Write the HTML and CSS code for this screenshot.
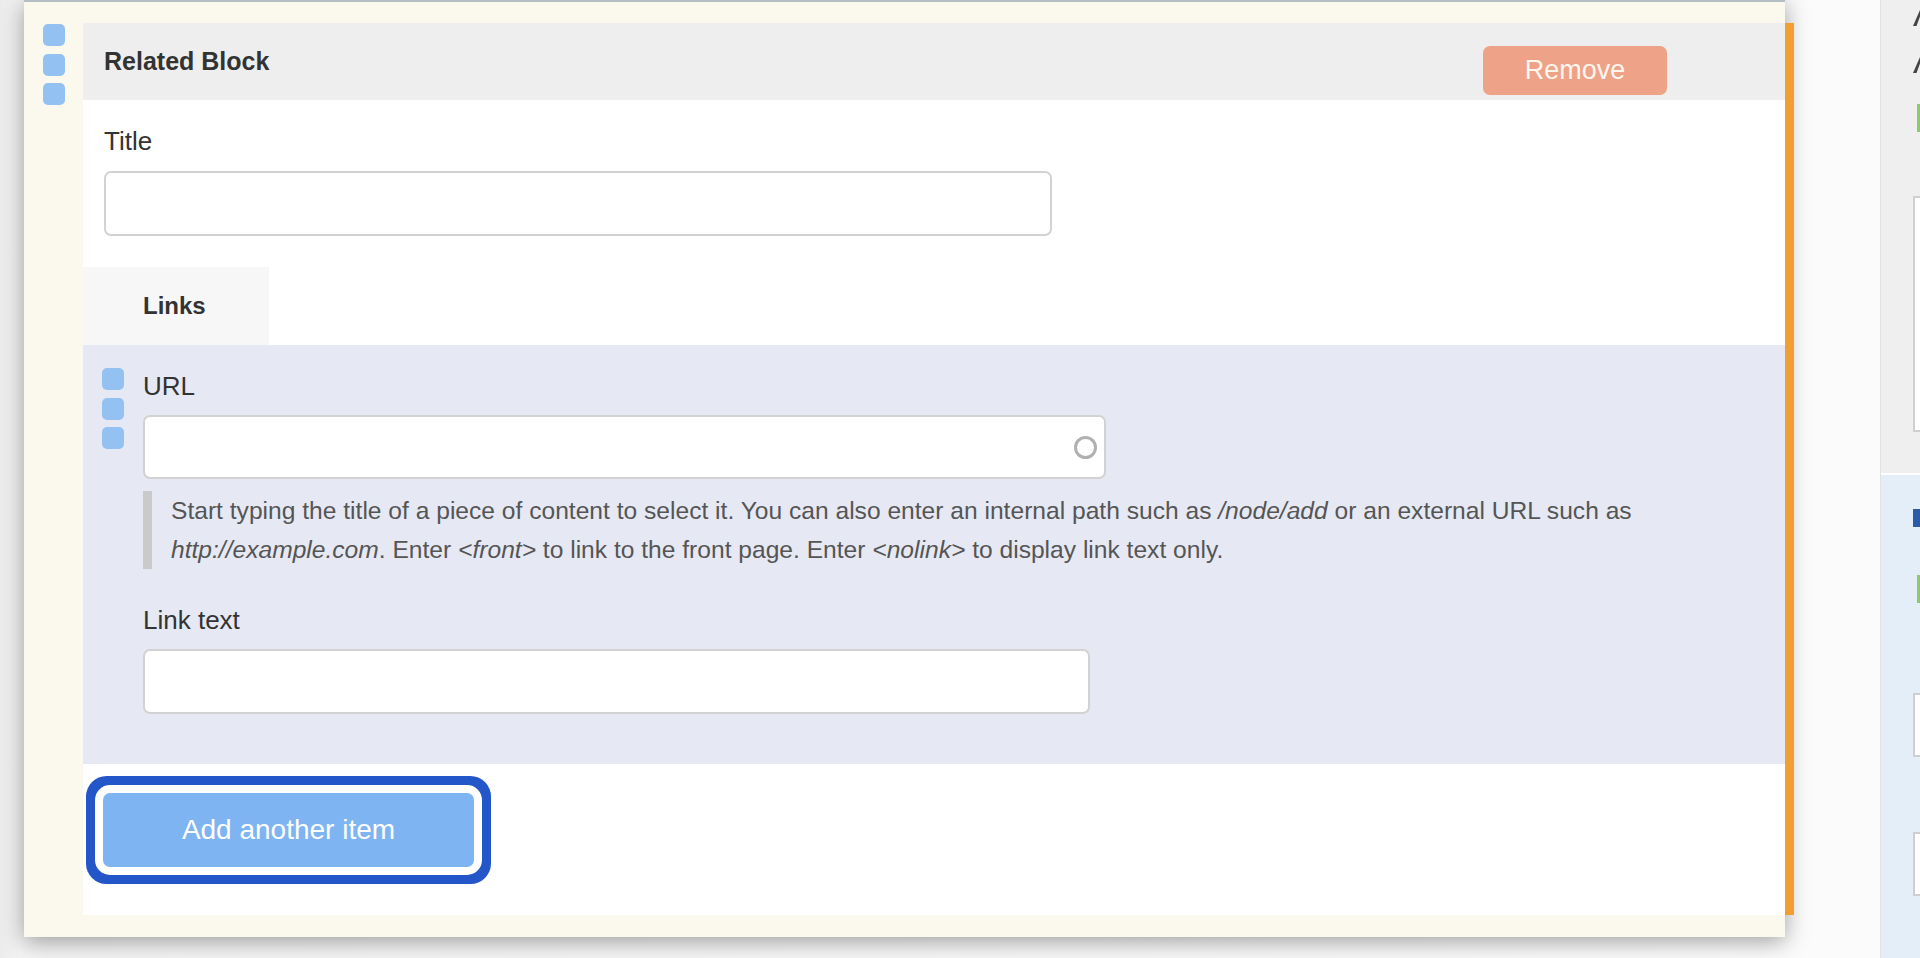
FILE: index.html
```html
<!DOCTYPE html>
<html lang="en">
<head>
    <meta charset="UTF-8">
    <meta name="viewport" content="width=device-width, initial-scale=1.0">
    <title>Related Block</title>
    <link rel="stylesheet" href="styles.css">
</head>
<body>
    <div class="page">
        <div class="stage">
            <div class="panel">
                <div class="handle">
                    <span></span><span></span><span></span>
                </div>
                <div class="block">
                    <div class="block-head">
                        <h2 class="block-title">Related Block</h2>
                        <button class="btn-remove">Remove</button>
                    </div>
                    <div class="block-body">
                        <div class="title-field">
                            <label class="field-label">Title</label>
                            <input class="text-input title-input" type="text">
                        </div>

                        <div class="tabs">
                            <div class="tab">Links</div>
                        </div>

                        <div class="item">
                            <div class="handle">
                                <span></span><span></span><span></span>
                            </div>
                            <div class="item-fields">
                                <label class="field-label url-label">URL</label>
                                <div class="input-wrap">
                                    <input class="text-input url-input" type="text">
                                    <span class="throbber"></span>
                                </div>
                                <div class="description">
                                    Start typing the title of a piece of content to select it. You can also enter an internal path such as <em>/node/add</em> or an external URL such as<br>
                                    <em>http://example.com</em>. Enter <em>&lt;front&gt;</em> to link to the front page. Enter <em>&lt;nolink&gt;</em> to display link text only.
                                </div>
                                <label class="field-label link-label">Link text</label>
                                <input class="text-input link-input" type="text">
                            </div>
                        </div>

                        <div class="actions">
                            <button class="btn-add">Add another item</button>
                        </div>
                    </div>
                </div>
            </div>
        </div>

        <!-- edge of the sidebar, mostly off screen -->
        <div class="side">
            <div class="side-top">
                <div class="side-mark"></div>
                <div class="side-mark"></div>
                <div class="side-check"></div>
                <div class="side-box"></div>
            </div>
            <div class="side-bottom">
                <div class="side-mark blue"></div>
                <div class="side-check"></div>
                <div class="side-box small"></div>
                <div class="side-box small"></div>
            </div>
        </div>
    </div>
</body>
</html>
```

FILE: styles.css
```css
body {
    margin: 0;
    font-family: "Liberation Sans", Arial, sans-serif;
    background-color: #f5f5f5;
    color: #333;
    overflow: hidden;
}
.page {
    display: flex;
    height: 958px;
}
.stage {
    flex: 0 0 1880px;
    padding-left: 24px;
    box-sizing: border-box;
    background: linear-gradient(to right, #ececec, #f4f4f4 20px, #fbfbfb 1830px);
}
.panel {
    width: 1761px;
    height: 937px;
    box-sizing: border-box;
    display: flex;
    align-items: flex-start;
    gap: 18px;
    padding: 21px 0 0 19px;
    background-color: #fbf8ee;
    border-top: 2px solid #b3bec5;
    box-shadow: 0 4px 22px rgba(0, 0, 0, 0.38);
}
.handle {
    flex: none;
    display: flex;
    flex-direction: column;
    gap: 7.5px;
    margin-top: 1px;
}
.handle span {
    width: 22px;
    height: 22px;
    border-radius: 5px;
    background-color: #93c1f1;
}
.block {
    flex: none;
    width: 1702px;
    background-color: #fff;
    border-right: 9px solid #f29e33;
}
.block-head {
    height: 77px;
    display: flex;
    justify-content: space-between;
    align-items: flex-start;
    padding: 0 118px 0 21px;
    background-color: #eeeeee;
}
.block-title {
    margin: 0;
    padding-top: 23px;
    font-size: 25px;
    line-height: 30px;
    font-weight: bold;
    color: #333;
}
.btn-remove {
    margin-top: 23px;
    width: 184px;
    height: 49px;
    border: none;
    border-radius: 7px;
    background-color: #eea287;
    color: #fff6ee;
    font-family: inherit;
    font-size: 27px;
}
.block-body {
    padding-top: 26px;
}
.title-field {
    padding: 0 21px;
}
.field-label {
    display: block;
    font-size: 26px;
    line-height: 30px;
    color: #333;
    margin-bottom: 15px;
}
.text-input {
    display: block;
    box-sizing: border-box;
    height: 65px;
    border: 2px solid #d2d2d2;
    border-radius: 7px;
    background-color: #fff;
}
.title-input {
    width: 948px;
}
.tabs {
    margin-top: 31px;
    display: flex;
}
.tab {
    width: 186px;
    height: 78px;
    box-sizing: border-box;
    display: flex;
    align-items: center;
    padding-left: 60px;
    background-color: #f7f7f7;
    font-size: 24px;
    font-weight: bold;
}
.item {
    display: flex;
    gap: 19px;
    padding: 23px 0 50px 19px;
    background-color: #e6e9f4;
}
.item .handle {
    margin-top: 0;
}
.item-fields .url-label {
    margin-top: 3px;
    margin-bottom: 14px;
}
.input-wrap {
    position: relative;
    width: 963px;
}
.url-input {
    width: 963px;
    height: 64px;
}
.throbber {
    position: absolute;
    right: 9px;
    top: 21px;
    width: 17px;
    height: 17px;
    border: 3px solid #b0b0b0;
    border-radius: 50%;
}
.description {
    margin-top: 12px;
    padding-left: 19px;
    border-left: 9px solid #cacaca;
    font-size: 24.6px;
    line-height: 39px;
    color: #555;
}
.item-fields .link-label {
    margin-top: 36px;
    margin-bottom: 14px;
}
.link-input {
    width: 947px;
    height: 65px;
}
.actions {
    padding: 29px 0 48px 20px;
}
.btn-add {
    width: 371px;
    height: 74px;
    border: none;
    border-radius: 7px;
    background-color: #7eb4f1;
    color: #fff;
    font-family: inherit;
    font-size: 28px;
    box-shadow: 0 0 0 8px #fff, 0 0 0 17px #2356c8;
}
.side {
    flex: 1;
    display: flex;
    flex-direction: column;
    overflow: hidden;
    border-left: 1px solid #e2e2e2;
}
.side-top {
    flex: none;
    height: 473px;
    box-sizing: border-box;
    padding: 10px 0 0 32px;
    background-color: #efefef;
}
.side-bottom {
    flex: 1;
    padding: 34px 0 0 32px;
    background-color: #e3eef9;
    border-top: 2px solid #fff;
}
.side-mark {
    width: 14px;
    height: 16px;
    margin-bottom: 31px;
    background-color: #444;
    clip-path: polygon(0 100%, 50% 0, 100% 100%, 75% 100%, 50% 40%, 25% 100%);
}
.side-mark.blue {
    height: 18px;
    margin-bottom: 48px;
    background-color: #2a5aa8;
    clip-path: none;
}
.side-check {
    width: 20px;
    height: 28px;
    margin: 0 0 64px 4px;
    background-color: #8ccc66;
}
.side-box {
    width: 200px;
    height: 232px;
    border: 2px solid #cfcfcf;
    background-color: #fff;
}
.side-bottom .side-check {
    margin-bottom: 90px;
}
.side-box.small {
    height: 60px;
    margin-bottom: 75px;
}
```
